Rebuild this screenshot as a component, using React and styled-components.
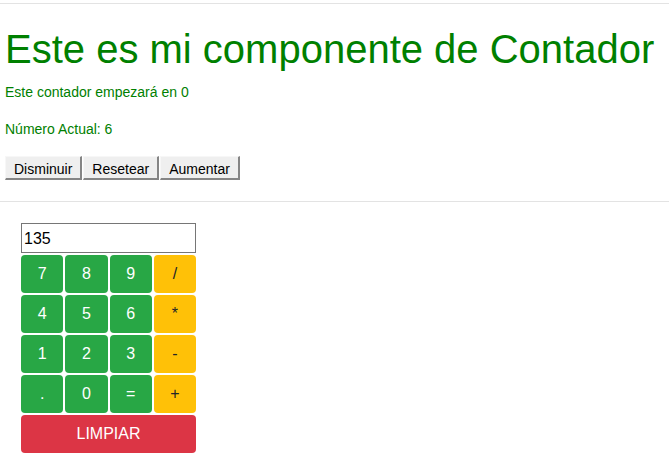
import React, { useState } from "react";
import styled, { createGlobalStyle } from "styled-components";

const Global = createGlobalStyle`
  html, body { margin: 0; padding: 0; background: #fff; }
  body { font-family: "Liberation Sans", Arial, sans-serif; }
`;

const Page = styled.div`
  padding: 0 5px 0 5px;
`;

const Rule = styled.hr`
  border: 0;
  border-top: 1px solid #e3e3e3;
  margin: ${(p) => (p.$first ? "3px -5px 0" : "21px -5px 0")};
  height: 0;
`;

const Counter = styled.section`
  color: #008000;
`;

const Title = styled.h1`
  margin: 22px 0 0;
  font-size: 40px;
  line-height: 46px;
  font-weight: 400;
`;

const Line = styled.p`
  margin: ${(p) => (p.$gap ? `${p.$gap}px` : "0")} 0 0;
  font-size: 14px;
  line-height: 16px;
`;

const ButtonRow = styled.div`
  display: flex;
  gap: 1px;
  margin-top: 19px;
`;

const ClassicButton = styled.button`
  font-family: "Liberation Sans", Arial, sans-serif;
  font-size: 14px;
  line-height: 16px;
  height: 24px;
  box-sizing: border-box;
  padding: 3px 8px 1px;
  color: #000;
  background: #efefef;
  border-top: 1px solid #f7f7f7;
  border-left: 1px solid #f7f7f7;
  border-right: 2px solid #858585;
  border-bottom: 2px solid #858585;
  border-radius: 0;
  cursor: pointer;
`;

const Calculator = styled.section`
  margin: 21px 0 0 16px;
  width: 175px;
`;

const Display = styled.input`
  display: block;
  width: 175px;
  height: 30px;
  box-sizing: border-box;
  border: 1px solid #767676;
  padding: 1px 2px 0;
  font-family: "Liberation Sans", Arial, sans-serif;
  font-size: 16px;
  color: #000;
  outline: none;
  margin: 0;
`;

const Keypad = styled.div`
  display: grid;
  grid-template-columns: repeat(4, 1fr);
  grid-auto-rows: 38px;
  gap: 2px;
  margin-top: 2px;
`;

const palette = {
  num: { bg: "#28a745", fg: "#fff" },
  op: { bg: "#ffc107", fg: "#212529" },
  clear: { bg: "#dc3545", fg: "#fff" },
};

const Key = styled.button`
  grid-column: ${(p) => (p.$wide ? "1 / -1" : "auto")};
  background: ${(p) => palette[p.$kind].bg};
  color: ${(p) => palette[p.$kind].fg};
  border: 0;
  border-radius: 4px;
  font-family: "Liberation Sans", Arial, sans-serif;
  font-size: 16px;
  padding: 0;
  cursor: pointer;
`;

const rows = [
  ["7", "8", "9", "/"],
  ["4", "5", "6", "*"],
  ["1", "2", "3", "-"],
  [".", "0", "=", "+"],
];

export default function App() {
  const [count, setCount] = useState(6);
  const [display, setDisplay] = useState("135");

  const press = (k) => {
    if (k === "=") {
      try {
        // eslint-disable-next-line no-new-func
        setDisplay(String(Function(`return (${display})`)()));
      } catch (e) {
        setDisplay("Error");
      }
    } else {
      setDisplay((d) => d + k);
    }
  };

  return (
    <Page>
      <Global />
      <Rule $first />
      <Counter>
        <Title>Este es mi componente de Contador</Title>
        <Line $gap={12}>Este contador empezará en 0</Line>
        <Line $gap={21}>Número Actual: {count}</Line>
        <ButtonRow>
          <ClassicButton onClick={() => setCount((c) => c - 1)}>Disminuir</ClassicButton>
          <ClassicButton onClick={() => setCount(0)}>Resetear</ClassicButton>
          <ClassicButton onClick={() => setCount((c) => c + 1)}>Aumentar</ClassicButton>
        </ButtonRow>
      </Counter>
      <Rule />
      <Calculator>
        <Display value={display} onChange={(e) => setDisplay(e.target.value)} />
        <Keypad>
          {rows.flat().map((k, i) => (
            <Key key={k} $kind={i % 4 === 3 ? "op" : "num"} onClick={() => press(k)}>
              {k}
            </Key>
          ))}
          <Key $kind="clear" $wide onClick={() => setDisplay("")}>
            LIMPIAR
          </Key>
        </Keypad>
      </Calculator>
    </Page>
  );
}
